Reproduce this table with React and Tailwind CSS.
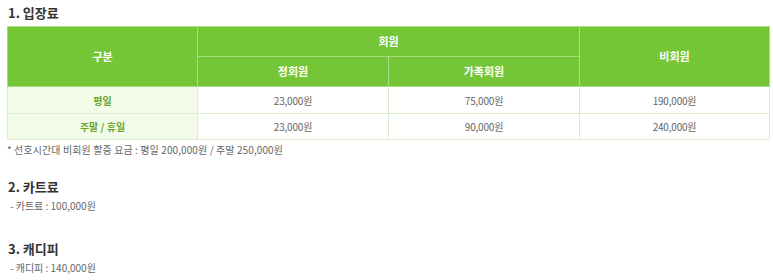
import React from "react";

const font = { fontFamily: '"Noto Sans CJK KR", "Noto Sans", sans-serif' };

export default function App() {
  const th = "border border-[#a8dc80] text-white font-bold text-[11px] text-center align-middle";
  const tdL = "border border-[#dcecd0] bg-[#f2fbe8] text-[#68a62e] font-bold text-[10px] text-center align-middle";
  const td = "border border-[#dcecd0] bg-white text-[#666] text-[10px] tracking-[-0.2px] text-center align-middle";
  return (
    <div className="w-[773px] h-[280px] bg-white overflow-hidden" style={font}>
      <div className="pl-[7px]">
        <div className="h-[26px] pt-[4px] pl-[1px] text-[13px] leading-[18px] font-bold text-[#333]">1. 입장료</div>
        <table className="w-[762px] border-collapse table-fixed">
          <colgroup>
            <col className="w-[190px]" />
            <col className="w-[191px]" />
            <col className="w-[191px]" />
            <col className="w-[190px]" />
          </colgroup>
          <thead className="bg-[#74c637]">
            <tr className="h-[30px]">
              <th rowSpan={2} className={th}>구분</th>
              <th colSpan={2} className={th}>회원</th>
              <th rowSpan={2} className={th}>비회원</th>
            </tr>
            <tr className="h-[30px]">
              <th className={th}>정회원</th>
              <th className={th}>가족회원</th>
            </tr>
          </thead>
          <tbody>
            <tr className="h-[27px]">
              <td className={tdL}>평일</td>
              <td className={td}>23,000원</td>
              <td className={td}>75,000원</td>
              <td className={td}>190,000원</td>
            </tr>
            <tr className="h-[26px]">
              <td className={tdL}>주말 / 휴일</td>
              <td className={td}>23,000원</td>
              <td className={td}>90,000원</td>
              <td className={td}>240,000원</td>
            </tr>
          </tbody>
        </table>
        <div className="mt-[2px] text-[10px] leading-[16px] tracking-[0.1px] text-[#666]">* 선호시간대 비회원 할증 요금 : 평일 200,000원 / 주말 250,000원</div>
        <div className="mt-[20px] pl-[1px] text-[13px] leading-[18px] font-bold text-[#333]">2. 카트료</div>
        <div className="mt-[2px] pl-[3px] text-[10px] leading-[16px] text-[#666]">- 카트료 : 100,000원</div>
        <div className="mt-[26px] pl-[1px] text-[13px] leading-[18px] font-bold text-[#333]">3. 캐디피</div>
        <div className="mt-[2px] pl-[3px] text-[10px] leading-[16px] text-[#666]">- 캐디피 : 140,000원</div>
      </div>
    </div>
  );
}
